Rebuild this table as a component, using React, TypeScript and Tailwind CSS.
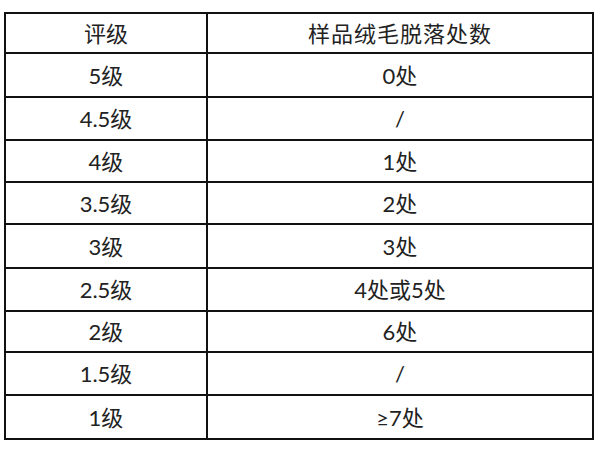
const ROWS = [
  { grade: '5级', count: '0处', h: 'h-[44px]' },
  { grade: '4.5级', count: '/', h: 'h-[43px]' },
  { grade: '4级', count: '1处', h: 'h-[42px]' },
  { grade: '3.5级', count: '2处', h: 'h-[42px]' },
  { grade: '3级', count: '3处', h: 'h-[44px]' },
  { grade: '2.5级', count: '4处或5处', h: 'h-[43px]' },
  { grade: '2级', count: '6处', h: 'h-[41px]' },
  { grade: '1.5级', count: '/', h: 'h-[43px]' },
  { grade: '1级', count: '≥7处', h: 'h-[44px]' },
]

export default function App() {
  return (
    <div className="w-[600px] h-[450px] bg-white pt-[12px] pl-[4px]">
      <table
        className="w-[590px] border-collapse border-2 border-[#111] text-[22px] text-[#222] text-center"
        style={{ fontFamily: 'Lato, "Noto Sans CJK SC", sans-serif' }}
      >
        <tbody>
          <tr className="h-[40px]">
            <td className="w-[202px] border-2 border-[#111] p-0">评级</td>
            <td className="border-2 border-[#111] p-0 tracking-[1px]">样品绒毛脱落处数</td>
          </tr>
          {ROWS.map((r) => (
            <tr key={r.grade} className={r.h}>
              <td className="border-2 border-[#111] p-0">{r.grade}</td>
              <td className="border-2 border-[#111] p-0">{r.count}</td>
            </tr>
          ))}
        </tbody>
      </table>
    </div>
  )
}
